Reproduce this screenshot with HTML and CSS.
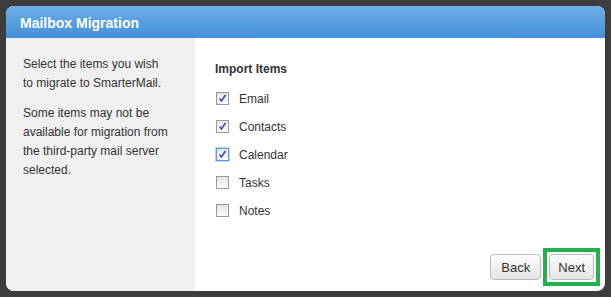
FILE: index.html
```html
<!DOCTYPE html>
<html>
<head>
	<meta charset="utf-8" />
	<title>Mailbox Migration</title>
	<link rel="stylesheet" href="styles.css">
</head>
<body>
	<div class="dialog">
		<div class="dialog-header">Mailbox Migration</div>
		<div class="dialog-body">
			<div class="side">
				<p>Select the items you wish to migrate to SmarterMail.</p>
				<p>Some items may not be available for migration from the third-party mail server selected.</p>
			</div>
			<div class="main">
				<div class="section-title">Import Items</div>
				<div class="items">
					<label class="item"><span class="box checked"><svg viewBox="0 0 13 13" width="13" height="13"><path d="M3.5 6.5 L5.5 9 L9.5 3" fill="none" stroke="#3b4fa8" stroke-width="1.6"/></svg></span>Email</label>
					<label class="item"><span class="box checked"><svg viewBox="0 0 13 13" width="13" height="13"><path d="M3.5 6.5 L5.5 9 L9.5 3" fill="none" stroke="#3b4fa8" stroke-width="1.6"/></svg></span>Contacts</label>
					<label class="item"><span class="box checked focused"><svg viewBox="0 0 13 13" width="13" height="13"><path d="M3.5 6.5 L5.5 9 L9.5 3" fill="none" stroke="#3b4fa8" stroke-width="1.6"/></svg></span>Calendar</label>
					<label class="item"><span class="box"></span>Tasks</label>
					<label class="item"><span class="box"></span>Notes</label>
				</div>
				<div class="buttons">
					<button type="button">Back</button>
					<span class="highlight"><button type="button">Next</button></span>
				</div>
			</div>
		</div>
	</div>
</body>
</html>
```

FILE: styles.css
```css
body {
	margin: 0;
	padding: 6px;
	background-color: #3d3d3d;
	font-family: "Liberation Sans", Arial, sans-serif;
	font-size: 12px;
	color: #333;
}

.dialog {
	width: 599px;
	height: 285px;
	border-radius: 8px;
	overflow: hidden;
	background-color: #fff;
	display: flex;
	flex-direction: column;
}

.dialog-header {
	height: 32px;
	line-height: 34px;
	padding-left: 14px;
	background: linear-gradient(#6daee6, #4490d9);
	color: #fff;
	font-size: 14px;
	font-weight: bold;
}

.dialog-body {
	flex: 1;
	display: flex;
}

/* left description column */
.side {
	width: 146px;
	padding: 17px 26px 0 17px;
	background-color: #f0f0f0;
	line-height: 19.3px;
}

.side p {
	margin: 0 0 10px 0;
}

.main {
	flex: 1;
	padding: 23px 5px 5px 20px;
	display: flex;
	flex-direction: column;
}

.section-title {
	font-weight: bold;
	line-height: 16px;
}

.items {
	margin-top: 14px;
	display: flex;
	flex-direction: column;
	gap: 13px;
}

.item {
	display: flex;
	align-items: center;
	height: 15px;
	padding-left: 1px;
}

.box {
	width: 11px;
	height: 11px;
	border: 1px solid #999;
	background: linear-gradient(#e6e6e6, #fafafa);
	margin-right: 10px;
	display: flex;
}

.box svg {
	margin: -1px;
}

.box.focused {
	border-color: #5a9be0;
	box-shadow: 0 0 0 1px #b9d6f3;
}

.buttons {
	margin-top: auto;
	display: flex;
	justify-content: flex-end;
	align-items: center;
	gap: 2px;
}

button {
	height: 26px;
	padding: 0 10px;
	border: 1px solid #bbb;
	border-radius: 4px;
	background: linear-gradient(#fdfdfd, #e4e4e4);
	font-family: "Liberation Sans", Arial, sans-serif;
	font-size: 13px;
	color: #333;
}

.highlight {
	display: flex;
	padding: 2px;
	border: 4px solid #22b14c;
}

.highlight button {
	padding: 0 8px;
}
```
